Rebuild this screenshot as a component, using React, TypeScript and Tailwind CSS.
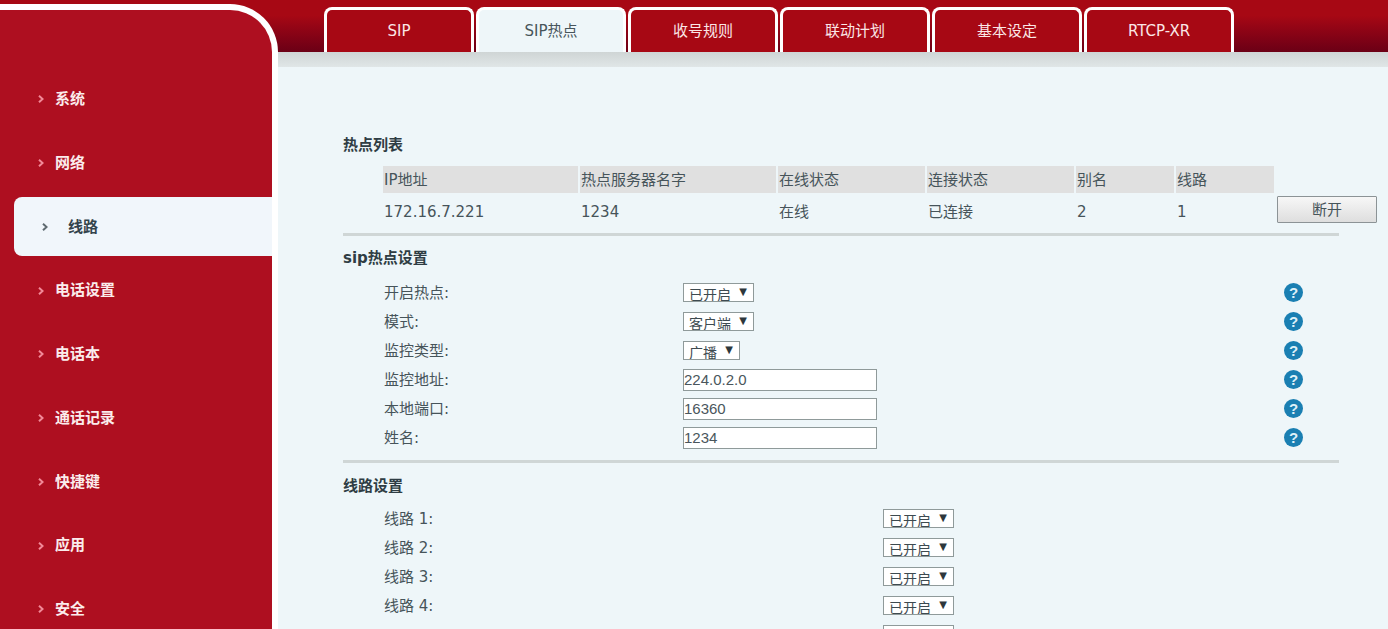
const sans = "font-['DejaVu_Sans','Noto_Sans_CJK_SC',sans-serif]";
const arial = "font-['Liberation_Sans','Noto_Sans_CJK_SC',sans-serif]";

const menu = ['系统', '网络', '线路', '电话设置', '电话本', '通话记录', '快捷键', '应用', '安全'];
const tabs = ['SIP', 'SIP热点', '收号规则', '联动计划', '基本设定', 'RTCP-XR'];
const cols = [
  { head: 'IP地址', val: '172.16.7.221', w: 'w-[197px]' },
  { head: '热点服务器名字', val: '1234', w: 'w-[198px]' },
  { head: '在线状态', val: '在线', w: 'w-[149px]' },
  { head: '连接状态', val: '已连接', w: 'w-[149px]' },
  { head: '别名', val: '2', w: 'w-[100px]' },
  { head: '线路', val: '1', w: 'w-[100px]' },
];

function Chevron({ dark }: { dark?: boolean }) {
  return (
    <svg width="6" height="8" viewBox="0 0 6 8" className="shrink-0">
      <path d="M1 0.8 L4.6 4 L1 7.2" fill="none" stroke={dark ? '#5f6a70' : '#f28a98'} strokeWidth="2" />
    </svg>
  );
}

function Help() {
  return (
    <div className={`${arial} w-[19px] h-[19px] rounded-full bg-[#1a7fb2] text-[#dff1f8] text-[15px] leading-[19px] font-bold text-center`}>
      ?
    </div>
  );
}

function Select({ label, w }: { label: string; w: string }) {
  return (
    <div className={`${w} ${arial} h-[19px] bg-white border border-[#8f9a9a] flex items-start justify-between pl-[5px] pr-[6px] overflow-hidden`}>
      <span className="text-[14px] leading-[19px] mt-[2px] text-[#3d4a50]">{label}</span>
      {label && <span className={`${sans} text-[10px] leading-[15px] text-[#2d373c]`}>▼</span>}
    </div>
  );
}

function Field({ value }: { value: string }) {
  return (
    <div className={`${arial} w-[194px] h-[22px] bg-white border border-[#8f9a9a] text-[15px] leading-[20px] text-[#4a565c]`}>
      {value}
    </div>
  );
}

function Row({ label, children }: { label: string; children: React.ReactNode }) {
  return (
    <div className="h-[29px] flex items-center">
      <div className="w-[340px] pl-[41px] pt-[2px] text-[15px] text-[#46545a]">{label}</div>
      <div className="w-[601px]">{children}</div>
      <Help />
    </div>
  );
}

function LineRow({ label, option = '已开启' }: { label: string; option?: string }) {
  return (
    <div className="h-[29px] flex items-center">
      <div className="w-[540px] pl-[41px] pt-[2px] text-[15px] text-[#46545a]">{label}</div>
      <Select label={option} w="w-[71px]" />
    </div>
  );
}

function Heading({ children }: { children: React.ReactNode }) {
  return <div className="text-[15px] leading-[20px] font-bold text-[#2f3d44]">{children}</div>;
}

function Rule() {
  return <div className="w-[996px] h-[3px] bg-[#cfd6d6]" />;
}

export default function App() {
  return (
    <div className={`${sans} relative w-[1388px] h-[629px] overflow-hidden bg-[#eef6f9] flex`}>
      <div className="absolute inset-x-0 top-0 h-[52px] bg-gradient-to-b from-[#a70814] from-30% to-[#6b0015]" />

      <aside className="relative z-10 w-[278px] h-[640px] mt-[4px] shrink-0 bg-[#ae0f20] border-t-[6px] border-r-[6px] border-white rounded-tr-[48px]">
        <nav className="flex flex-col pt-[57.5px]">
          {menu.map((m) =>
            m === '线路' ? (
              <div key={m} className="ml-[14px] w-[258px] h-[59px] my-[2.375px] rounded-l-[8px] bg-[#f1f6fb] flex items-center pl-[28px] gap-[20px] text-[15px] font-bold text-[#34444c]">
                <Chevron dark />
                {m}
              </div>
            ) : (
              <div key={m} className="h-[63.75px] flex items-center pl-[38px] gap-[11px] text-[15px] font-bold text-[#fbecec]">
                <Chevron />
                {m}
              </div>
            )
          )}
        </nav>
      </aside>

      <main className="relative flex-1 min-w-0">
        <div className="h-[52px] flex items-end pl-[46px] gap-[2px]">
          {tabs.map((t, i) => (
            <div
              key={t}
              className={`w-[150px] h-[45px] rounded-t-[8px] border-[3px] border-b-0 border-white flex items-center justify-center text-[15px] ${
                i === 1 ? 'bg-[#eef6f9] text-[#47555b]' : 'bg-[#a70814] text-[#fbe6e6]'
              }`}
            >
              {t}
            </div>
          ))}
        </div>
        <div className="h-[15px] bg-gradient-to-b from-[#cfd5d5] to-[#e0e6e7]" />

        <div className="pl-[65px] pt-[68px]">
          <Heading>热点列表</Heading>
          <div className="pl-[40px] mt-[11px] flex">
            {cols.map((c) => (
              <div key={c.head} className={`${c.w} text-[15px] text-[#46545a]`}>
                <div className="h-[27px] mr-[2px] bg-[#e0e0e0] pl-[1px] pt-[2px] leading-[25px] whitespace-nowrap">{c.head}</div>
                <div className="h-[33px] pl-[1px] pt-[3px] leading-[33px]">{c.val}</div>
              </div>
            ))}
            <div className="ml-[1px] mt-[30px] w-[100px] h-[27px] border border-[#8c9396] rounded-[1px] bg-gradient-to-b from-[#f7f7f7] to-[#dedede] text-center text-[15px] leading-[26px] text-[#46545a]">
              断开
            </div>
          </div>
          <div className="mt-[7px]"><Rule /></div>

          <div className="mt-[12px]"><Heading>sip热点设置</Heading></div>
          <div className="mt-[10px]">
            <Row label="开启热点:"><Select label="已开启" w="w-[71px]" /></Row>
            <Row label="模式:"><Select label="客户端" w="w-[71px]" /></Row>
            <Row label="监控类型:"><Select label="广播" w="w-[57px]" /></Row>
            <Row label="监控地址:"><Field value="224.0.2.0" /></Row>
            <Row label="本地端口:"><Field value="16360" /></Row>
            <Row label="姓名:"><Field value="1234" /></Row>
          </div>
          <div className="mt-[8px]"><Rule /></div>

          <div className="mt-[13px]"><Heading>线路设置</Heading></div>
          <div className="mt-[8px]">
            <LineRow label="线路 1:" />
            <LineRow label="线路 2:" />
            <LineRow label="线路 3:" />
            <LineRow label="线路 4:" />
            <LineRow label="" option="" />
          </div>
        </div>
      </main>
    </div>
  );
}
